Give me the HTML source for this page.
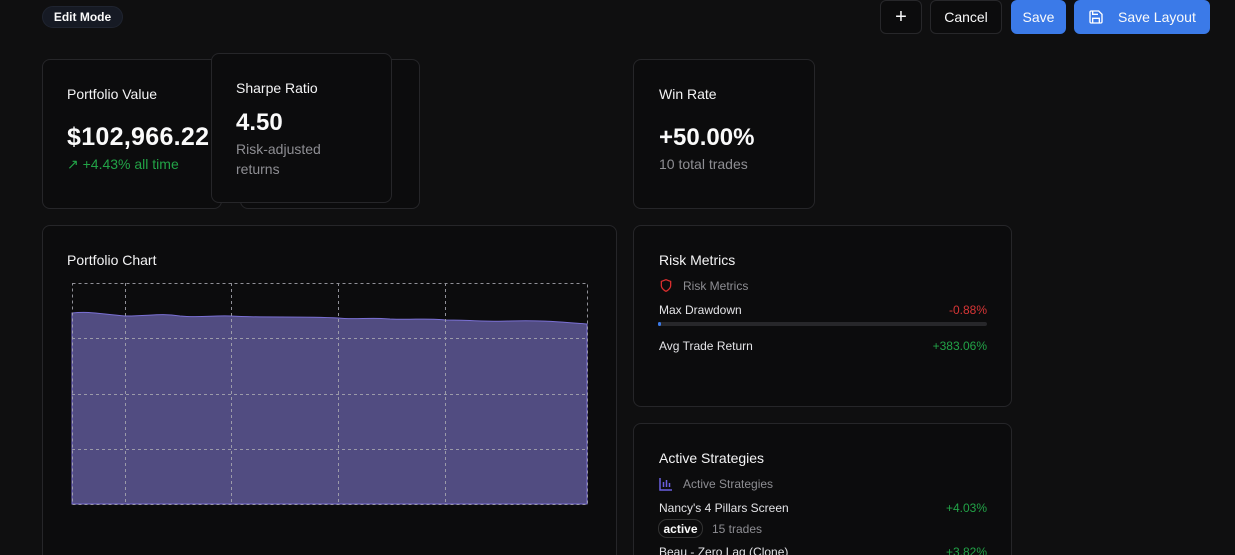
<!DOCTYPE html><html style="height:555px;overflow:hidden"><head><style>
body{margin:0;width:1235px;height:555px;overflow:hidden;background:#0f0f10;font-family:"Liberation Sans",sans-serif;color:#fafafa;position:relative}
.card{position:absolute;background:#0c0c0d;border:1px solid #262629;border-radius:8px;box-sizing:border-box}
.t{position:absolute;font-size:14px;color:#f4f4f5}
.abs{position:absolute}
.btn{position:absolute;top:0;height:34px;border-radius:6px;box-sizing:border-box;font-size:14px;display:flex;align-items:center;justify-content:center}
</style></head><body>
<div class="abs" style="left:42px;top:6px;width:81px;height:22px;border-radius:11px;background:#161a24;border:1px solid #1f2430;box-sizing:border-box;font-size:12px;font-weight:bold;display:flex;align-items:center;justify-content:center">Edit Mode</div>

<div class="btn" style="left:880px;width:42px;border:1px solid #27272a;background:#0c0c0d;font-size:20px">+</div>
<div class="btn" style="left:930px;width:72px;border:1px solid #27272a;background:#0c0c0d">Cancel</div>
<div class="btn" style="left:1011px;width:55px;background:#3b7ae8">Save</div>
<div class="btn" style="left:1074px;width:136px;background:#3b7ae8;justify-content:flex-start;padding-left:14px"><svg width="16" height="16" viewBox="0 0 24 24" fill="none" stroke="#fff" stroke-width="2"><path d="M5 3h11l5 5v11a2 2 0 0 1-2 2H5a2 2 0 0 1-2-2V5a2 2 0 0 1 2-2z"/><path d="M7 3v5h8M7 21v-7h10v7"/></svg><span style="margin-left:14px">Save Layout</span></div>

<div class="card" style="left:42px;top:59px;width:180px;height:150px"></div>
<div class="t" style="left:67px;top:86px">Portfolio Value</div>
<div class="abs" style="left:67px;top:123px;font-size:25px;font-weight:bold;letter-spacing:0.3px">$102,966.22</div>
<div class="abs" style="left:67px;top:156px;font-size:14px;color:#22a347">↗ +4.43% all time</div>
<div class="card" style="left:240px;top:59px;width:180px;height:150px"></div>
<div class="card" style="left:211px;top:53px;width:181px;height:150px;background:#0c0c0d"></div>
<div class="t" style="left:236px;top:80px">Sharpe Ratio</div>
<div class="abs" style="left:236px;top:109px;font-size:24px;font-weight:bold">4.50</div>
<div class="abs" style="left:236px;top:139px;font-size:14px;color:#8e8e93;line-height:20px">Risk-adjusted<br>returns</div>

<div class="card" style="left:633px;top:59px;width:182px;height:150px"></div>
<div class="t" style="left:659px;top:86px">Win Rate</div>
<div class="abs" style="left:659px;top:124px;font-size:24px;font-weight:bold">+50.00%</div>
<div class="abs" style="left:659px;top:156px;font-size:14px;color:#8e8e93">10 total trades</div>

<div class="card" style="left:42px;top:225px;width:575px;height:340px"></div>
<div class="t" style="left:67px;top:252px">Portfolio Chart</div>
<svg class="abs" style="left:0;top:0" width="620" height="555">
<path d="M72 313 C90 311 100 314 125 316 C150 316 160 313 180 316 C200 318 215 315 231 316 C260 318 300 316 338 318 C355 320 370 317 390 319 C410 320 430 318 445 320 C470 320 490 322 510 321 C540 320 560 322 587 324 L587 504 L72 504Z" fill="#514c81" stroke="#7a70d4" stroke-width="1"/>
<g stroke="#a8a8b0" stroke-width="1" stroke-dasharray="3 3" fill="none" opacity=".85">
<rect x="72.5" y="283.5" width="515" height="221"/>
<path d="M125.5 283v221M231.5 283v221M338.5 283v221M445.5 283v221M72 338.5h515M72 394.5h515M72 449.5h515"/></g></svg>

<div class="card" style="left:633px;top:225px;width:379px;height:182px"></div>
<div class="t" style="left:659px;top:252px">Risk Metrics</div>
<svg class="abs" style="left:659px;top:278px" width="14" height="15" viewBox="0 0 24 24" fill="none" stroke="#dc2f2f" stroke-width="2.2"><path d="M12 22s8-4 8-10V5l-8-3-8 3v7c0 6 8 10 8 10z"/></svg>
<div class="abs" style="left:683px;top:279px;font-size:12px;color:#8e8e93">Risk Metrics</div>
<div class="abs" style="left:659px;top:303px;font-size:12px;color:#e4e4e7">Max Drawdown</div>
<div class="abs" style="right:248px;top:303px;font-size:12px;color:#d73636">-0.88%</div>
<div class="abs" style="left:658px;top:322px;width:329px;height:4px;border-radius:2px;background:#27272a"><div style="width:3px;height:4px;background:#3b7ae8;border-radius:2px"></div></div>
<div class="abs" style="left:659px;top:339px;font-size:12px;color:#e4e4e7">Avg Trade Return</div>
<div class="abs" style="right:248px;top:339px;font-size:12px;color:#22a347">+383.06%</div>

<div class="card" style="left:633px;top:423px;width:379px;height:160px"></div>
<div class="t" style="left:659px;top:450px">Active Strategies</div>
<svg class="abs" style="left:659px;top:477px" width="14" height="14" viewBox="0 0 14 14" fill="none" stroke="#6a5fe0" stroke-width="1.5"><path d="M1 1v12h12M4.5 10V5M7.5 10V3M10.5 10V6"/></svg>
<div class="abs" style="left:683px;top:477px;font-size:12px;color:#8e8e93">Active Strategies</div>
<div class="abs" style="left:659px;top:501px;font-size:12px;color:#e4e4e7">Nancy's 4 Pillars Screen</div>
<div class="abs" style="right:248px;top:501px;font-size:12px;color:#22a347">+4.03%</div>
<div class="abs" style="left:658px;top:519px;width:45px;height:19px;border:1px solid #333;border-radius:9px;box-sizing:border-box;font-size:12px;font-weight:bold;display:flex;align-items:center;justify-content:center">active</div>
<div class="abs" style="left:712px;top:522px;font-size:12px;color:#8e8e93">15 trades</div>
<div class="abs" style="left:659px;top:545px;font-size:12px;color:#e4e4e7">Beau - Zero Lag (Clone)</div>
<div class="abs" style="right:248px;top:545px;font-size:12px;color:#22a347">+3.82%</div>
</body></html>
